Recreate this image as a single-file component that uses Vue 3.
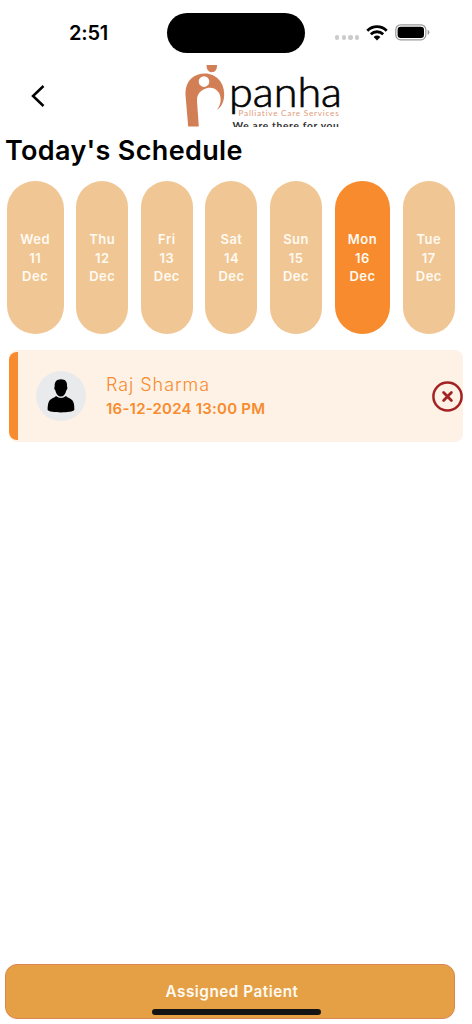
<script setup>
const days = [
  { name: 'Wed', date: 11, size: 'wide' },
  { name: 'Thu', date: 12 },
  { name: 'Fri', date: 13 },
  { name: 'Sat', date: 14 },
  { name: 'Sun', date: 15 },
  { name: 'Mon', date: 16, size: 'active' },
  { name: 'Tue', date: 17 },
]
</script>

<template>
  <div class="screen">
    <div class="status">
      <span class="time">2:51</span>
      <div class="island"></div>
      <div class="signals">
        <div class="dots"><i v-for="n in 4" :key="n"></i></div>
        <svg class="wifi" width="22" height="16" viewBox="0 0 22 16">
          <g fill="none" stroke="#000" stroke-width="2.8">
            <path d="M1.3 5.7 C6.8 .3 15.2 .3 20.7 5.7" />
            <path d="M4.8 9.3 C8.4 5.9 13.6 5.9 17.2 9.3" />
          </g>
          <path d="M7.6 12 Q11 9.1 14.4 12 L11 15.6Z" />
        </svg>
        <svg class="battery" width="35" height="17" viewBox="0 0 35 17">
          <rect x=".8" y=".8" width="30" height="15" rx="4.8" fill="#fff" stroke="#999" stroke-width="1.2" />
          <rect x="2.6" y="2.7" width="26.4" height="11.2" rx="3.2" />
          <path d="M32.6 5.8 Q34.4 6.7 34.4 8.3 T32.6 10.9Z" fill="#999" />
        </svg>
      </div>
    </div>

    <header class="header">
      <svg class="back" width="14" height="23" viewBox="0 0 14 23">
        <path d="M12.5 1 L2 11 L12.5 21" fill="none" stroke="#000" stroke-width="2.5" />
      </svg>
      <svg class="logo" width="160" height="62" viewBox="0 0 160 62">
        <g fill="#d27f55">
          <path d="M21.5 0 H32 Q32.2 7.2 26.8 7.3 Q21.5 7.2 21.5 0Z" />
          <path fill-rule="evenodd" d="M3.2 61.5 L.5 30 C-.3 16 9 8.6 20 8.6 C31 8.6 39.2 17.5 39.2 29 C39.2 36 37 41.5 32 44.8 C36.3 39.5 36.8 32 33.5 27.3 C30.6 23.2 26.4 22 21.7 23.2 C15.4 24.8 11.7 29.5 12 36 L13.8 61.5Z M19 11.3 A5.3 5.3 0 1 0 19 21.9 A5.3 5.3 0 1 0 19 11.3Z" />
        </g>
        <text class="brand" x="44" y="42" textLength="113" lengthAdjust="spacingAndGlyphs">panha</text>
        <text class="services" x="53.5" y="50.5" textLength="101" lengthAdjust="spacingAndGlyphs">Palliative Care Services</text>
        <text class="motto" x="47.5" y="63.6" textLength="107" lengthAdjust="spacingAndGlyphs">We are there for you</text>
      </svg>
    </header>

    <h1 class="title">Today's Schedule</h1>

    <div class="days">
      <div v-for="day in days" :key="day.date" class="day" :class="day.size">
        <span>{{ day.name }}</span>
        <span>{{ day.date }}</span>
        <span>Dec</span>
      </div>
    </div>

    <article class="card">
      <div class="stripe"></div>
      <div class="avatar">
        <svg width="28" height="34" viewBox="0 0 28 34">
          <path d="M14 .3 C18.5 .3 20.5 3 20 7.6 C20.7 8.5 20.4 10.5 19.4 11.3 C18.3 15.6 16.5 17.6 14 17.6 C11.5 17.6 9.3 15.6 8.3 11.3 C7.2 10.5 7 8.5 7.7 7.6 C7.3 3 9.5 .3 14 .3Z" />
          <path d="M9 17 Q14 20.9 19 17 C20.5 19 23.5 19.2 25.3 21.2 C27.3 23.6 27.4 28 27.3 31 C25.3 34.2 2.6 34.2 .6 31 C.6 28 .8 23.6 2.7 21.2 C4.5 19.2 7.5 19 9 17Z" />
        </svg>
      </div>
      <div class="details">
        <div class="patient">Raj Sharma</div>
        <div class="slot">16-12-2024 13:00 PM</div>
      </div>
      <svg class="cancel" width="31" height="31" viewBox="0 0 31 31" fill="none" stroke="#a32323">
        <circle cx="15.5" cy="15.5" r="14.1" stroke-width="2.5" />
        <path d="M11.6 11.6 L19.4 19.4 M19.4 11.6 L11.6 19.4" stroke-width="2.8" stroke-linecap="round" />
      </svg>
    </article>

    <button class="assigned">Assigned Patient<span class="home"></span></button>
  </div>
</template>

<style>
body { background: #fff; }
</style>

<style scoped>
.screen {
  box-sizing: border-box;
  width: 472px;
  height: 1024px;
  display: flex;
  flex-direction: column;
  overflow: hidden;
  background: #fff;
  font-family: Inter, "Liberation Sans", sans-serif;
}
.status {
  height: 65px;
  display: flex;
  align-items: center;
  flex-shrink: 0;
}
.time { width: 98px; margin-left: 69px; font-size: 20px; font-weight: 600; letter-spacing: -.2px; }
.island { width: 138px; height: 40px; border-radius: 20px; background: #000; }
.signals { display: flex; align-items: center; margin-left: 30px; }
.dots { display: flex; gap: 2.2px; margin-top: 10px; }
.dots i { width: 4.4px; height: 4.4px; border-radius: 50%; background: #cbcbcb; }
.wifi { margin-left: 7px; }
.battery { margin-left: 7px; }
.header { height: 62px; display: flex; align-items: center; flex-shrink: 0; }
.back { margin-left: 31px; }
.logo { margin-left: 140px; }
.brand { font: 300 41px Lato, sans-serif; fill: #050505; stroke: #050505; stroke-width: .7px; }
.services { font: 400 7.6px Lato, sans-serif; letter-spacing: .7px; fill: #e09b78; }
.motto { font: 700 8.5px Lato, sans-serif; letter-spacing: .6px; fill: #303030; }
.title {
  margin: 5px 0 0 5px;
  font-size: 27px;
  line-height: 37px;
  font-weight: 600;
  letter-spacing: .33px;
  white-space: nowrap;
}
.days { display: flex; gap: 12.6px; margin: 12px 0 0 6.7px; flex-shrink: 0; }
.day {
  box-sizing: border-box;
  width: 52px;
  height: 153px;
  padding-top: 1px;
  border-radius: 28px;
  background: #f0c794;
  color: #fffaf2;
  display: flex;
  flex-direction: column;
  justify-content: center;
  align-items: center;
  font-size: 13px;
  line-height: 18.7px;
  font-weight: 600;
  letter-spacing: .5px;
}
.day.wide { width: 57px; }
.day.active { width: 55.6px; background: #f78b2d; }
.card {
  width: 454px;
  height: 92px;
  margin: 16px 0 0 9px;
  display: flex;
  align-items: center;
  flex-shrink: 0;
  border-radius: 8px;
  background: #fef2e7;
}
.stripe { width: 9px; height: 88px; border-radius: 8px 0 0 8px; background: #f78b2d; }
.avatar {
  width: 50px;
  height: 50px;
  margin-left: 18px;
  display: grid;
  place-items: center;
  border-radius: 50%;
  background: #e9eaec;
}
.details { flex: 1; margin-left: 20px; padding-top: 1px; color: #f78b2d; white-space: nowrap; }
.patient { font-size: 18px; line-height: 24px; font-weight: 300; letter-spacing: .95px; }
.slot { font-size: 15px; line-height: 23px; font-weight: 600; letter-spacing: .22px; }
.assigned {
  position: relative;
  box-sizing: border-box;
  width: 450px;
  height: 55px;
  margin: auto 0 5px 5px;
  padding: 0;
  border: 1px solid #dc8652;
  border-radius: 12px;
  background: #e5a045;
  color: #fffaf2;
  font: 600 15.3px/53px Inter, sans-serif;
  letter-spacing: .5px;
  text-indent: 4px;
}
.home {
  position: absolute;
  left: 146px;
  bottom: 3px;
  width: 169px;
  height: 6px;
  border-radius: 3px;
  background: #141414;
}
</style>
